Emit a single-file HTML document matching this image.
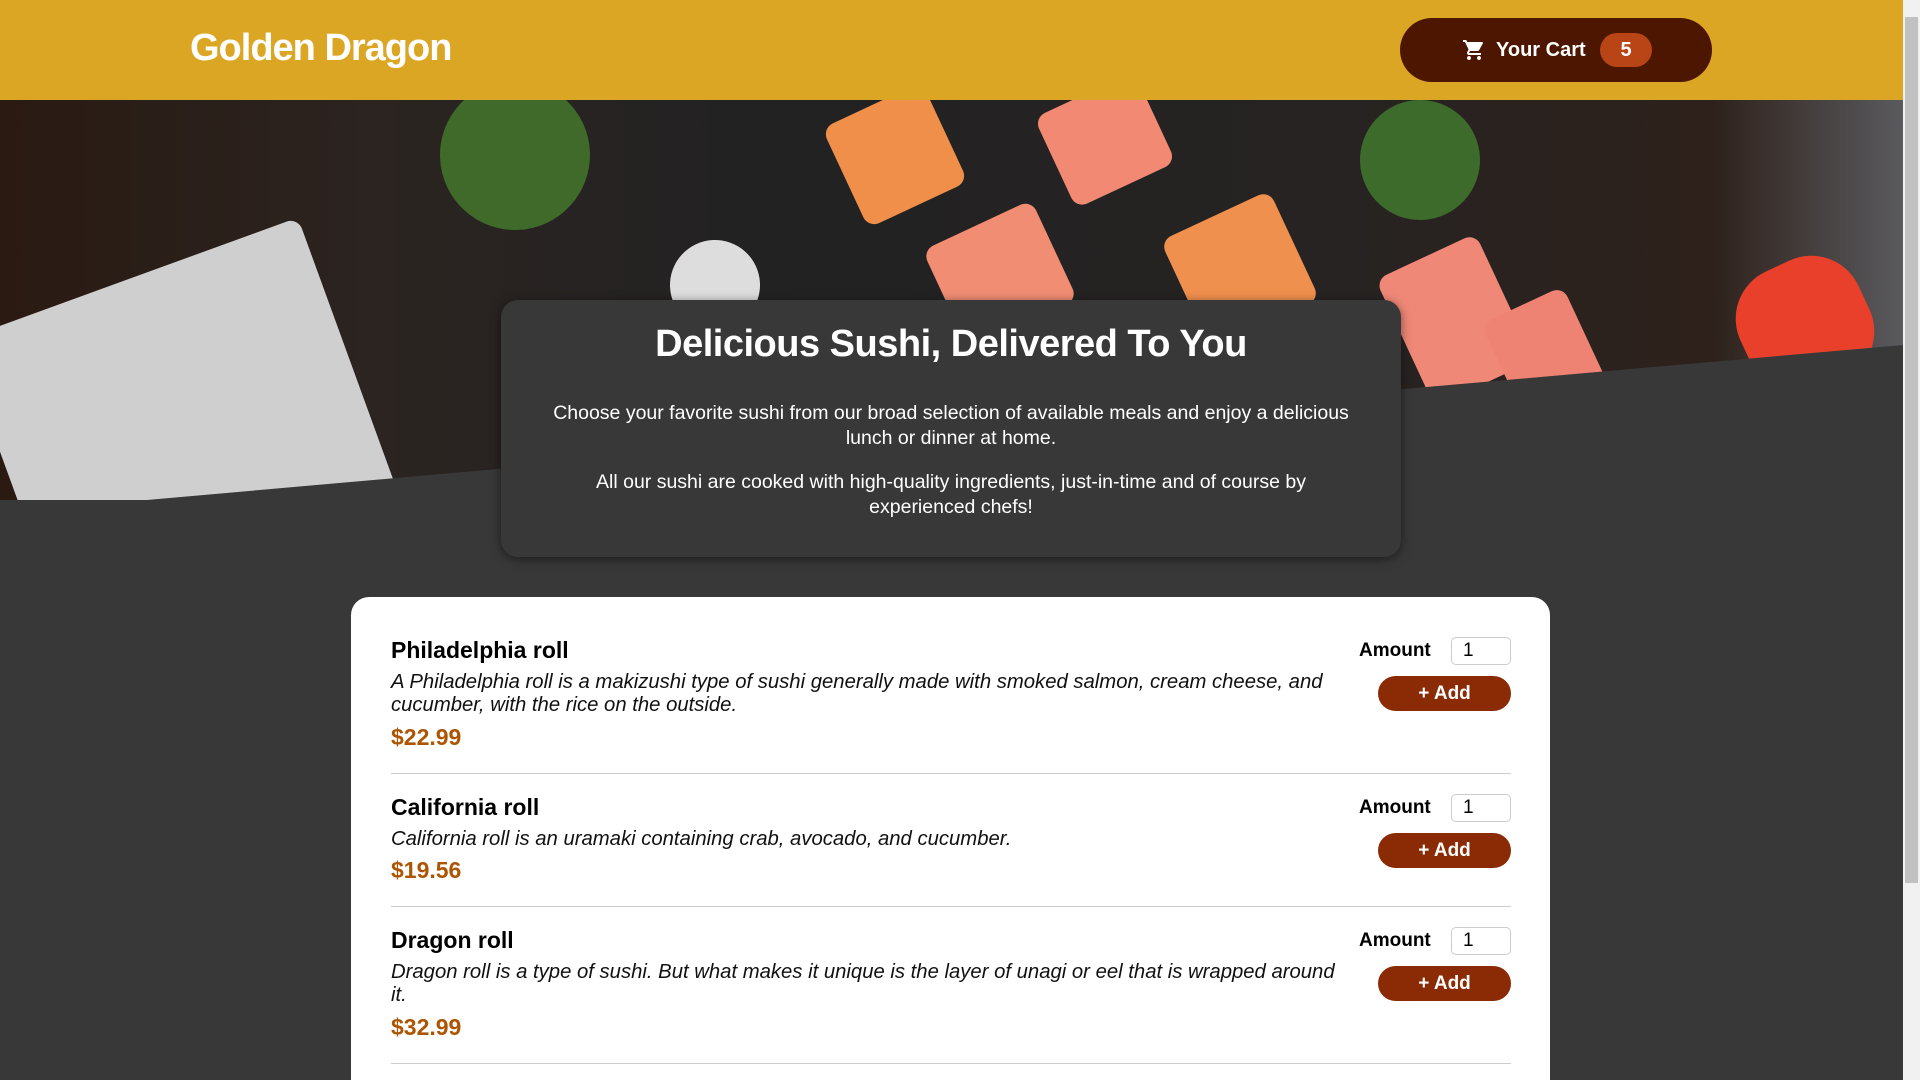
<!DOCTYPE html>
<html><head><meta charset="utf-8"><style>
*{margin:0;padding:0;box-sizing:border-box}
html,body{width:1920px;height:1080px;overflow:hidden;background:#383838;font-family:"Liberation Sans",sans-serif}
.header{position:absolute;left:0;top:0;width:1903px;height:100px;background:#dba623}
.logo{position:absolute;left:190px;top:27px;font-size:38px;font-weight:bold;color:#fff;letter-spacing:-1px}
.cart{position:absolute;left:1400px;top:18px;width:312px;height:64px;border-radius:32px;background:#4d1601;color:#fff}
.cart svg{position:absolute;left:62px;top:20px}
.cart .t{position:absolute;left:96px;top:21px;font-size:20px;font-weight:bold}
.badge{position:absolute;left:200px;top:15px;width:52px;height:34px;border-radius:17px;background:#b94517;text-align:center;font-size:20px;font-weight:bold;line-height:34px}
.hero{position:absolute;left:0;top:100px;width:1903px;height:400px;overflow:hidden;
clip-path:polygon(0 0,100% 0,100% 245px,147px 400px,0 400px);
background:linear-gradient(90deg,#2a1a12 0%,#2b2421 20%,#222 40%,#262322 70%,#2e211b 90%,#5a5a5e 100%)}
.blob{position:absolute;border-radius:12px;transform:rotate(-25deg)}
.summary{position:absolute;left:501px;top:300px;width:900px;height:257px;background:#383838;border-radius:17px;box-shadow:0 2px 10px rgba(0,0,0,.5);color:#fff;text-align:center;padding:20px 30px}
.summary h2{font-size:38px;margin-top:3px;letter-spacing:-.5px}
.summary p{font-size:19.5px;line-height:24.5px;margin-top:35px;padding:0 2px}
.summary p+p{margin-top:20px}
.meals{position:absolute;left:351px;top:597px;width:1199px;height:483px;background:#fff;border-radius:18px 18px 0 0}
.item{position:absolute;left:40px;width:1120px;border-bottom:1px solid #ccc}
.item h3{position:absolute;left:0;font-size:23px;font-weight:bold;color:#000}
.item .d{position:absolute;left:0;font-size:20.3px;font-style:italic;line-height:23px;white-space:nowrap;color:#111}
.item .p{position:absolute;left:0;font-size:23px;font-weight:bold;color:#ad5502}
.amt{position:absolute;left:968px;font-size:19px;font-weight:bold}
.inp{position:absolute;left:1060px;width:60px;height:28px;border:1px solid #ccc;border-radius:5px;font-size:19px;padding-left:11px;line-height:26px}
.add{position:absolute;left:987px;width:133px;height:35px;border-radius:18px;background:#8a2b06;color:#fff;text-align:center;font-size:19px;font-weight:bold;line-height:35px}
.sb{position:absolute;left:1903px;top:0;width:17px;height:1080px;background:#f1f1f1}
.thumb{position:absolute;left:1905px;top:17px;width:13px;height:866px;background:#c1c1c1}
</style></head><body>
<div class="header">
<div class="logo">Golden Dragon</div>
<div class="cart">
<svg width="24" height="24" viewBox="0 0 24 24"><path fill="#fff" d="M7 18c-1.1 0-2 .9-2 2s.9 2 2 2 2-.9 2-2-.9-2-2-2zM1 2v2h2l3.6 7.6-1.4 2.4c-.1.3-.2.6-.2 1 0 1.1.9 2 2 2h12v-2H7.4c-.1 0-.3-.1-.3-.3v-.1l.9-1.600h7.5c.8 0 1.4-.4 1.7-1l3.6-6.5c.1-.2.2-.3.2-.5 0-.6-.4-1-1-1H5.2l-.9-2H1zm16 16c-1.1 0-2 .9-2 2s.9 2 2 2 2-.9 2-2-.9-2-2-2z"/></svg>
<span class="t">Your Cart</span><span class="badge">5</span></div>
</div>
<div class="hero">
<div class="blob" style="left:0;top:170px;width:360px;height:300px;background:#cfcfcf;transform:rotate(-20deg)"></div>
<div class="blob" style="left:440px;top:-20px;width:150px;height:150px;background:#3f6a2a;border-radius:50%"></div>
<div class="blob" style="left:840px;top:0px;width:110px;height:110px;background:#ef8f4a"></div>
<div class="blob" style="left:1050px;top:-10px;width:110px;height:100px;background:#f28a73"></div>
<div class="blob" style="left:940px;top:120px;width:120px;height:110px;background:#f08d73"></div>
<div class="blob" style="left:1180px;top:110px;width:120px;height:120px;background:#f0904e"></div>
<div class="blob" style="left:1400px;top:150px;width:110px;height:140px;background:#f08878"></div>
<div class="blob" style="left:1500px;top:200px;width:90px;height:110px;background:#ef8373"></div>
<div class="blob" style="left:1360px;top:0;width:120px;height:120px;background:#3d6b2b;border-radius:50%"></div>
<div class="blob" style="left:1740px;top:160px;width:130px;height:130px;background:#e8402a;border-radius:40%"></div>
<div class="blob" style="left:670px;top:140px;width:90px;height:90px;background:#ddd;border-radius:50%"></div>
</div>
<div class="summary">
<h2>Delicious Sushi, Delivered To You</h2>
<p>Choose your favorite sushi from our broad selection of available meals and enjoy a delicious<br>lunch or dinner at home.</p>
<p>All our sushi are cooked with high-quality ingredients, just-in-time and of course by<br>experienced chefs!</p>
</div>
<div class="meals">
<div class="item" style="top:40px;height:137px">
<h3 style="top:0">Philadelphia roll</h3>
<div class="d" style="top:34px">A Philadelphia roll is a makizushi type of sushi generally made with smoked salmon, cream cheese, and<br>cucumber, with the rice on the outside.</div>
<div class="p" style="top:87px">$22.99</div>
<div class="amt" style="top:3px">Amount</div><div class="inp" style="top:0">1</div>
<div class="add" style="top:39px">+ Add</div>
</div>
<div class="item" style="top:197px;height:113px">
<h3 style="top:0">California roll</h3>
<div class="d" style="top:34px">California roll is an uramaki containing crab, avocado, and cucumber.</div>
<div class="p" style="top:63px">$19.56</div>
<div class="amt" style="top:3px">Amount</div><div class="inp" style="top:0">1</div>
<div class="add" style="top:39px">+ Add</div>
</div>
<div class="item" style="top:330px;height:137px">
<h3 style="top:0">Dragon roll</h3>
<div class="d" style="top:34px">Dragon roll is a type of sushi. But what makes it unique is the layer of unagi or eel that is wrapped around<br>it.</div>
<div class="p" style="top:87px">$32.99</div>
<div class="amt" style="top:3px">Amount</div><div class="inp" style="top:0">1</div>
<div class="add" style="top:39px">+ Add</div>
</div>
</div>
<div class="sb"></div><div class="thumb"></div>
</body></html>
